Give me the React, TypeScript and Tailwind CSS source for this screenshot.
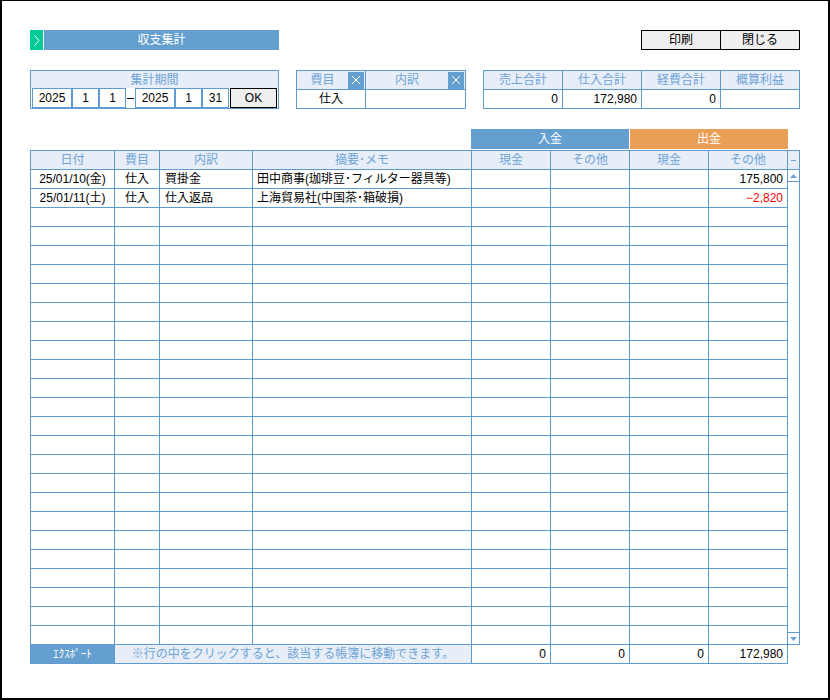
import React from "react";

const COLS = ["w-[84px]", "w-[45px]", "w-[93px]", "w-[219px]", "w-[79px]", "w-[79px]", "w-[79px]", "w-[79px]"];
const HEADS = ["日付", "費目", "内訳", "摘要･メモ", "現金", "その他", "現金", "その他"];
const ALIGN = [
  "justify-center",
  "justify-center",
  "justify-start pl-[5px]",
  "justify-start pl-[4px]",
  "justify-end pr-[4px]",
  "justify-end pr-[4px]",
  "justify-end pr-[4px]",
  "justify-end pr-[4px]",
];

type Row = { cells: string[]; red?: boolean };
const DATA: Row[] = [
  { cells: ["25/01/10(金)", "仕入", "買掛金", "田中商事(珈琲豆･フィルター器具等)", "", "", "", "175,800"] },
  { cells: ["25/01/11(土)", "仕入", "仕入返品", "上海貿易社(中国茶･箱破損)", "", "", "", "−2,820"], red: true },
];

function XBtn() {
  return (
    <div className="w-[16px] h-[17px] bg-[#659fd0] flex items-center justify-center">
      <svg width="10" height="10" viewBox="0 0 10 10">
        <path d="M1 1 L9 9 M9 1 L1 9" stroke="white" strokeWidth="1" />
      </svg>
    </div>
  );
}

export default function App() {
  const rows: Row[] = [];
  for (let i = 0; i < 25; i++) rows.push(DATA[i] ?? { cells: ["", "", "", "", "", "", "", ""] });

  return (
    <div className="w-[830px] h-[700px] bg-white border-black border-l-2 border-r-2 border-b-2 border-t pl-[28px] pt-[29px] font-['Liberation_Sans','Noto_Sans_CJK_JP',sans-serif] text-[12px] leading-[18px] text-black">
      <div className="w-[770px]">
        {/* Title row */}
        <div className="flex h-[20px]">
          <div className="w-[13px] h-[20px] bg-[#00c99a] flex items-center justify-center">
            <svg width="6" height="11" viewBox="0 0 6 11">
              <path d="M0.5 0.5 L5 5.5 L0.5 10.5" stroke="white" strokeWidth="1" fill="none" />
            </svg>
          </div>
          <div className="ml-px w-[235px] h-[20px] bg-[#659fd0] text-white flex items-center justify-center">
            収支集計
          </div>
          <div className="ml-auto flex">
            <div className="w-[80px] h-[20px] border border-black bg-[#efefef] flex items-center justify-center">印刷</div>
            <div className="-ml-px w-[80px] h-[20px] border border-black bg-[#efefef] flex items-center justify-center">閉じる</div>
          </div>
        </div>

        {/* Filters row */}
        <div className="mt-[20px] flex">
          {/* Period */}
          <div className="w-[249px] h-[39px] border border-[#5f9bd2] flex flex-col">
            <div className="h-[17px] bg-[#e7eef8] text-[#6ea3d6] flex items-center justify-center">集計期間</div>
            <div className="h-[20px] flex pl-px">
              <div className="w-[40px] h-[20px] border border-[#5f9bd2] flex items-center justify-center">2025</div>
              <div className="w-[27px] h-[20px] border border-[#5f9bd2] flex items-center justify-center">1</div>
              <div className="w-[27px] h-[20px] border border-[#5f9bd2] flex items-center justify-center">1</div>
              <div className="w-[9px] h-[20px] flex items-center justify-center">
                <div className="w-[7px] h-px bg-black" />
              </div>
              <div className="w-[40px] h-[20px] border border-[#5f9bd2] flex items-center justify-center">2025</div>
              <div className="w-[27px] h-[20px] border border-[#5f9bd2] flex items-center justify-center">1</div>
              <div className="w-[27px] h-[20px] border border-[#5f9bd2] flex items-center justify-center">31</div>
              <div className="ml-px w-[47px] h-[20px] border border-black bg-[#efefef] flex items-center justify-center">OK</div>
            </div>
          </div>

          {/* Category */}
          <div className="ml-[17px] w-[170px] h-[39px] border border-[#5f9bd2] flex flex-col">
            <div className="h-[19px] flex border-b border-[#5f9bd2] bg-[#e7eef8] text-[#6ea3d6]">
              <div className="w-[69px] h-[18px] border-r border-[#5f9bd2] flex items-center">
                <div className="flex-1 text-center">費目</div>
                <div className="mr-px"><XBtn /></div>
              </div>
              <div className="w-[99px] h-[18px] flex items-center">
                <div className="flex-1 text-center">内訳</div>
                <div className="mr-px"><XBtn /></div>
              </div>
            </div>
            <div className="h-[18px] flex">
              <div className="w-[69px] h-[18px] border-r border-[#5f9bd2] flex items-center justify-center">仕入</div>
              <div className="w-[99px] h-[18px]" />
            </div>
          </div>

          {/* Totals */}
          <div className="ml-[17px] w-[317px] h-[39px] border border-[#5f9bd2] flex flex-col">
            <div className="h-[19px] flex border-b border-[#5f9bd2] bg-[#e7eef8] text-[#6ea3d6]">
              <div className="w-[79px] border-r border-[#5f9bd2] flex items-center justify-center">売上合計</div>
              <div className="w-[79px] border-r border-[#5f9bd2] flex items-center justify-center">仕入合計</div>
              <div className="w-[79px] border-r border-[#5f9bd2] flex items-center justify-center">経費合計</div>
              <div className="w-[78px] flex items-center justify-center">概算利益</div>
            </div>
            <div className="h-[18px] flex">
              <div className="w-[79px] border-r border-[#5f9bd2] flex items-center justify-end pr-[4px]">0</div>
              <div className="w-[79px] border-r border-[#5f9bd2] flex items-center justify-end pr-[4px]">172,980</div>
              <div className="w-[79px] border-r border-[#5f9bd2] flex items-center justify-end pr-[4px]">0</div>
              <div className="w-[78px]" />
            </div>
          </div>
        </div>

        {/* 入金 / 出金 bands */}
        <div className="mt-[20px] ml-[441px] flex h-[20px]">
          <div className="w-[158px] bg-[#659fd0] text-white flex items-center justify-center">入金</div>
          <div className="ml-px w-[158px] bg-[#e9a056] text-white flex items-center justify-center">出金</div>
        </div>

        {/* Table */}
        <div className="mt-px flex items-start">
          <div className="border-l border-t border-[#5f9bd2] flex flex-col">
            <div className="flex h-[19px] bg-[#e7eef8] text-[#6ea3d6]">
              {HEADS.map((h, i) => (
                <div key={i} className={`${COLS[i]} h-[19px] border-r border-b border-[#5f9bd2] flex items-center justify-center`}>
                  {h}
                </div>
              ))}
            </div>
            {rows.map((r, ri) => (
              <div key={ri} className="flex h-[19px]">
                {r.cells.map((c, ci) => (
                  <div
                    key={ci}
                    className={`${COLS[ci]} h-[19px] border-r border-b border-[#5f9bd2] flex items-center whitespace-nowrap overflow-hidden ${ALIGN[ci]} ${
                      r.red && ci === 7 ? "text-[#ff0000]" : ""
                    }`}
                  >
                    {c}
                  </div>
                ))}
              </div>
            ))}
            {/* Footer */}
            <div className="flex h-[19px]">
              <div className="w-[84px] h-[19px] bg-[#659fd0] border-r border-b border-[#5f9bd2] text-white text-[11px] flex items-center justify-center">
                ｴｸｽﾎﾟｰﾄ
              </div>
              <div className="w-[357px] h-[19px] bg-[#e7eef8] text-[#6ea3d6] border-r border-b border-[#5f9bd2] flex items-center justify-center">
                ※行の中をクリックすると、該当する帳簿に移動できます。
              </div>
              <div className="w-[79px] h-[19px] border-r border-b border-[#5f9bd2] flex items-center justify-end pr-[4px]">0</div>
              <div className="w-[79px] h-[19px] border-r border-b border-[#5f9bd2] flex items-center justify-end pr-[4px]">0</div>
              <div className="w-[79px] h-[19px] border-r border-b border-[#5f9bd2] flex items-center justify-end pr-[4px]">0</div>
              <div className="w-[79px] h-[19px] border-r border-b border-[#5f9bd2] flex items-center justify-end pr-[4px]">172,980</div>
            </div>
          </div>

          {/* Scrollbar column */}
          <div className="flex flex-col">
            <div className="w-[12px] h-[20px] border-t border-r border-b border-[#5f9bd2] bg-[#e7eef8] flex items-center justify-center">
              <div className="w-[5px] h-px bg-[#6ea3d6]" />
            </div>
            <div className="w-[12px] h-[475px] border-r border-b border-[#5f9bd2] flex flex-col justify-between">
              <div className="h-[12px] border-b border-[#5f9bd2] flex items-center justify-center">
                <svg width="7" height="4" viewBox="0 0 7 4">
                  <path d="M3.5 0 L7 4 L0 4 Z" fill="#6ea3d6" />
                </svg>
              </div>
              <div className="h-[12px] border-t border-[#5f9bd2] flex items-center justify-center">
                <svg width="7" height="4" viewBox="0 0 7 4">
                  <path d="M0 0 L7 0 L3.5 4 Z" fill="#6ea3d6" />
                </svg>
              </div>
            </div>
          </div>
        </div>
      </div>
    </div>
  );
}
